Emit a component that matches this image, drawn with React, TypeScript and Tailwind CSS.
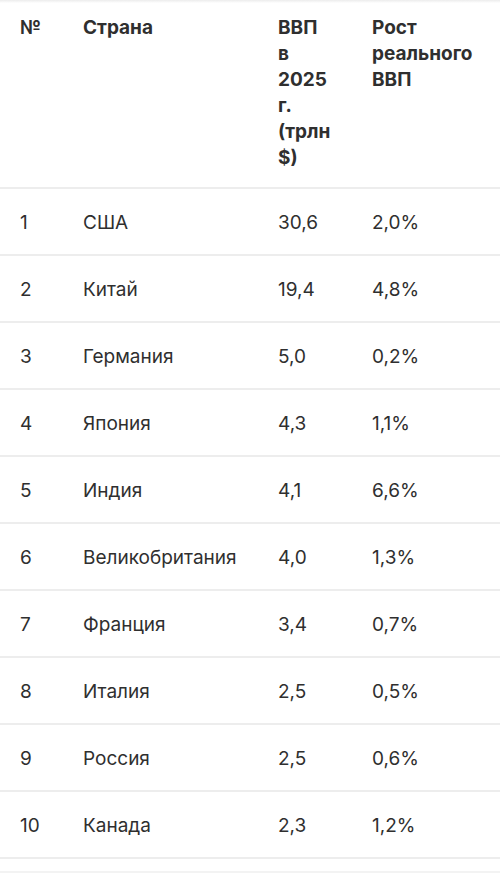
import React from "react";

const rows = [
	["1", "США", "30,6", "2,0%"],
	["2", "Китай", "19,4", "4,8%"],
	["3", "Германия", "5,0", "0,2%"],
	["4", "Япония", "4,3", "1,1%"],
	["5", "Индия", "4,1", "6,6%"],
	["6", "Великобритания", "4,0", "1,3%"],
	["7", "Франция", "3,4", "0,7%"],
	["8", "Италия", "2,5", "0,5%"],
	["9", "Россия", "2,5", "0,6%"],
	["10", "Канада", "2,3", "1,2%"],
];

const App = () => {
	return (
		<div className="min-h-[891px] bg-white font-['Inter',sans-serif] text-[19px] leading-[26px] text-[#2f2f2f]">
			<div className="h-[3px] bg-gradient-to-b from-[#ececec] to-white" />
			<table className="w-full table-fixed border-collapse">
				<colgroup>
					<col className="w-[63px]" />
					<col className="w-[195px]" />
					<col className="w-[94px]" />
					<col />
				</colgroup>
				<thead>
					<tr className="border-b-2 border-[#ededed] text-left align-top font-bold">
						<th className="px-5 pt-3 pb-[16px]">№</th>
						<th className="px-5 pt-3 pb-[16px]">Страна</th>
						<th className="px-5 pt-3 pb-[16px] whitespace-nowrap">
							ВВП
							<br />в
							<br />
							2025
							<br />
							г.
							<br />
							(трлн
							<br />
							$)
						</th>
						<th className="px-5 pt-3 pb-[16px] whitespace-nowrap">
							Рост
							<br />
							реального
							<br />
							ВВП
						</th>
					</tr>
				</thead>
				<tbody>
					{rows.map((r) => (
						<tr key={r[0]} className="border-b-2 border-[#ededed]">
							{r.map((c, i) => (
								<td key={i} className="px-5 pt-[21px] pb-[18px] whitespace-nowrap">
									{c}
								</td>
							))}
						</tr>
					))}
				</tbody>
			</table>
			<div className="mt-3 h-[2px] bg-[#f3f3f3]" />
		</div>
	);
};

export default App;
